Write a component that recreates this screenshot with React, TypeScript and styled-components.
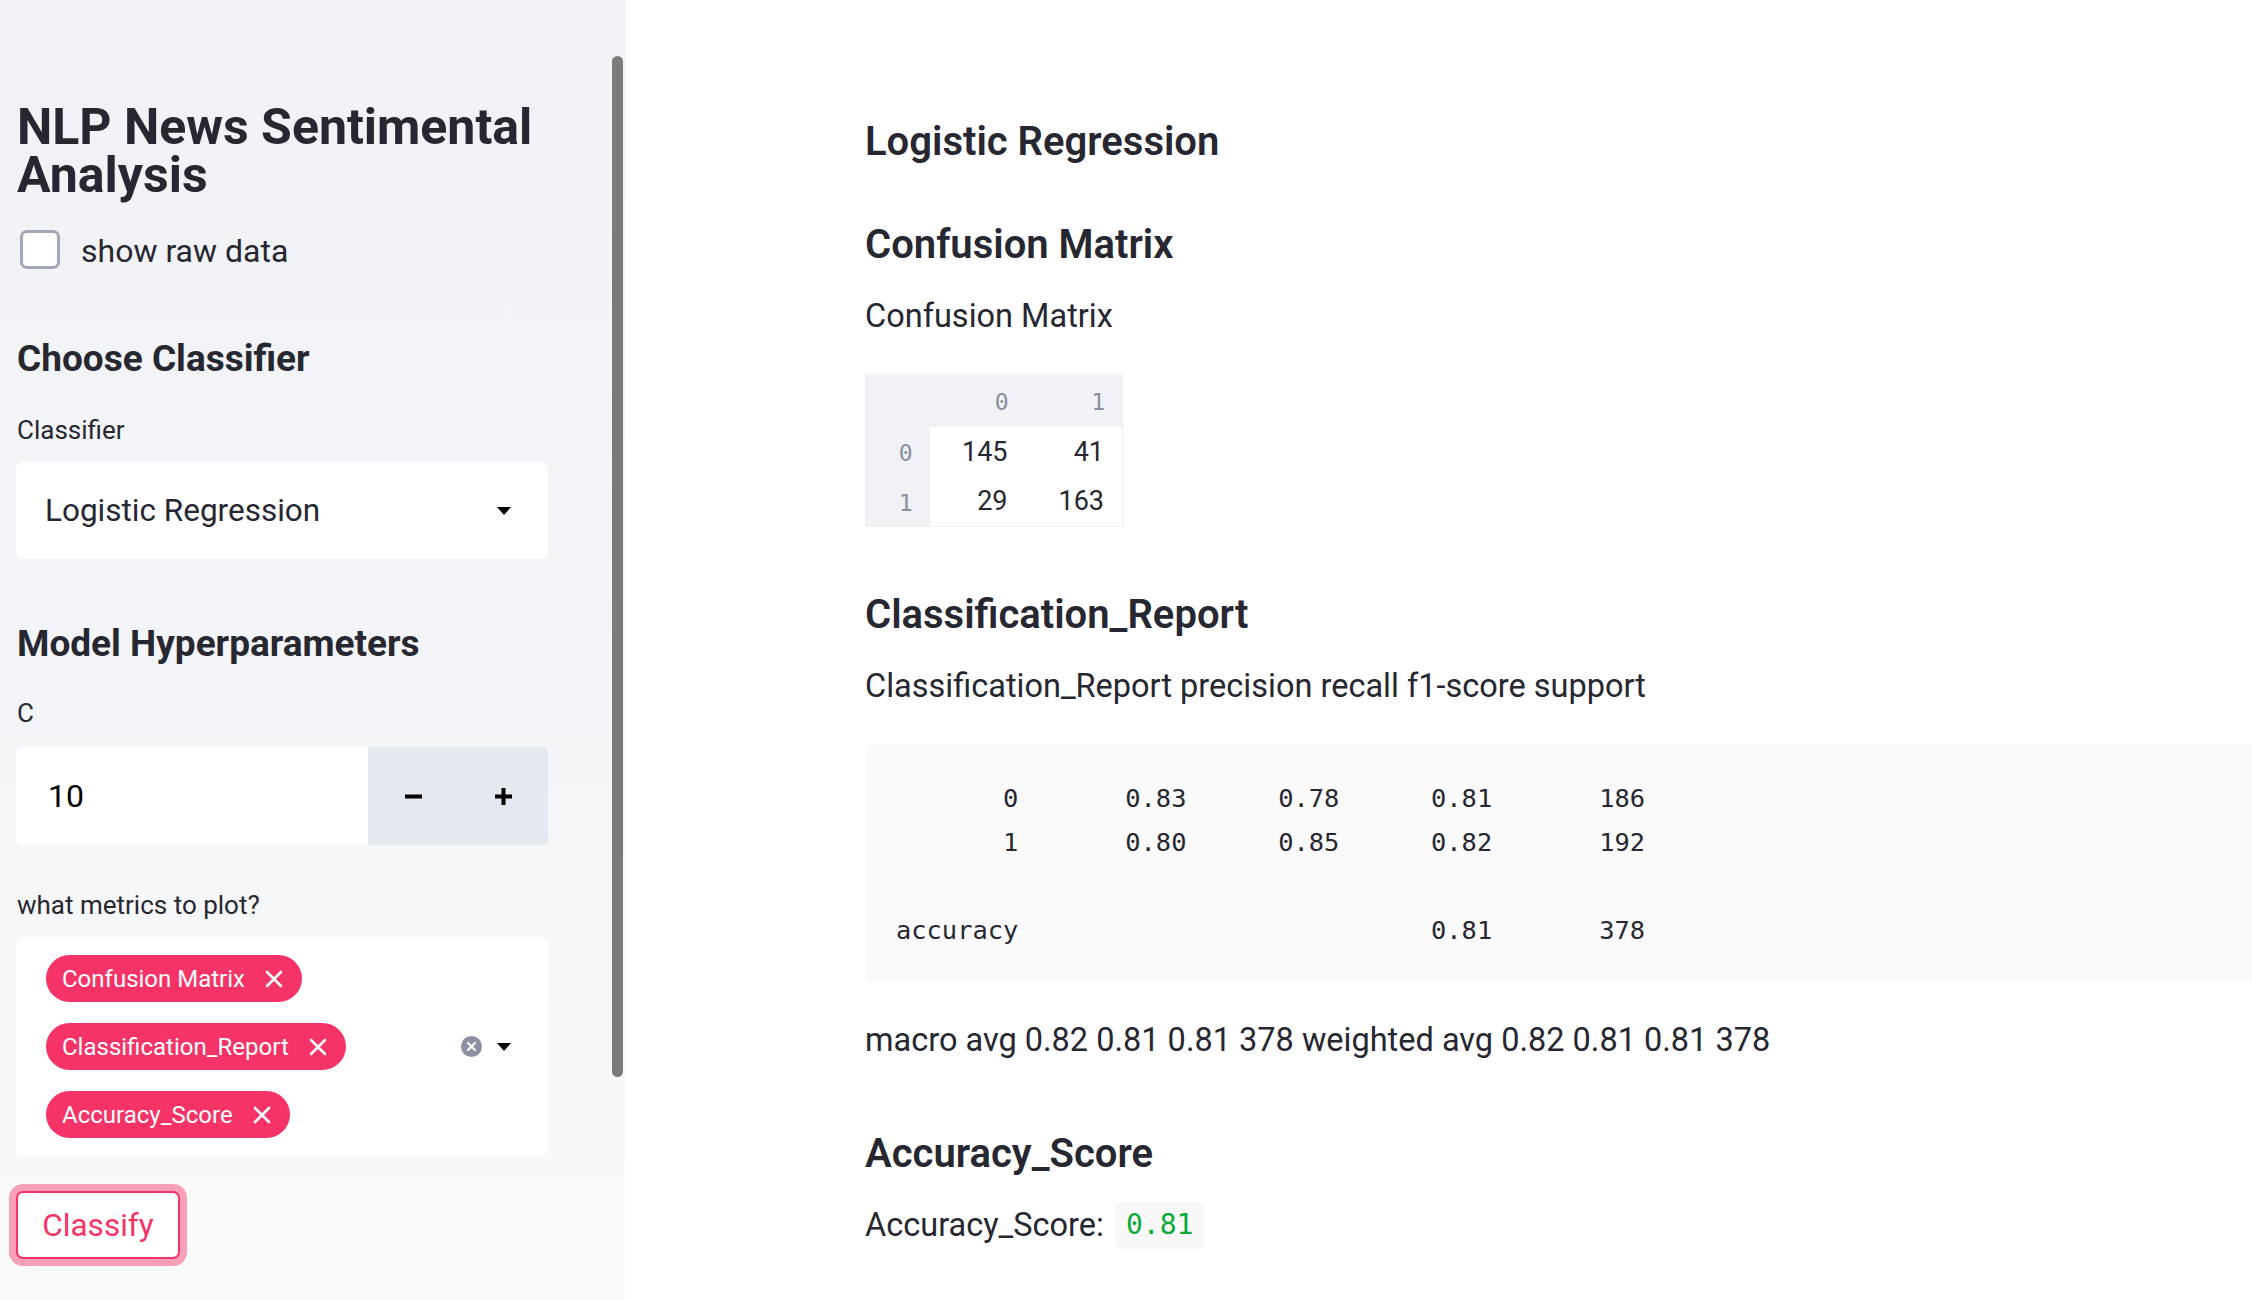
import React from "react";
import styled, { createGlobalStyle } from "styled-components";

const GlobalStyle = createGlobalStyle`
  html, body {
    margin: 0;
    padding: 0;
    overflow: hidden;
    background: #ffffff;
  }
  body {
    font-family: Roboto, "Noto Sans", sans-serif;
    color: #262730;
  }
  * { box-sizing: border-box; }
`;

const PINK = "#f63366";
const TEXT = "#262730";

const Page = styled.div`
  display: flex;
  width: 2252px;
  height: 1300px;
  overflow: hidden;
`;

const Sidebar = styled.aside`
  position: relative;
  flex: 0 0 625px;
  height: 100%;
  background: linear-gradient(180deg, #f0f2f6 0%, #f4f5f8 55%, #fafafa 100%);
  padding: 103px 77px 0 16px;
  display: flex;
  flex-direction: column;
`;

const ScrollThumb = styled.div`
  position: absolute;
  left: 612px;
  top: 56px;
  width: 11px;
  height: 1021px;
  border-radius: 6px;
  background: #7b7b7d;
`;

const SideTitle = styled.h1`
  margin: 0;
  font-size: 50px;
  line-height: 48px;
  font-weight: 700;
  color: ${TEXT};
  padding-left: 1px;
`;

const CheckRow = styled.label`
  display: flex;
  align-items: center;
  gap: 21px;
  margin-top: 31px;
  padding-left: 4px;
  height: 39px;
`;

const CheckBox = styled.span`
  width: 40px;
  height: 39px;
  border: 3px solid #a3a8b8;
  border-radius: 7px;
  background: #ffffff;
  flex: 0 0 auto;
`;

const CheckText = styled.span`
  font-size: 32px;
  line-height: 39px;
  padding-top: 3px;
  color: ${TEXT};
`;

const SideHeading = styled.h2<{ $mt: number }>`
  margin: ${(p) => p.$mt}px 0 0 0;
  font-size: 37px;
  line-height: 43px;
  font-weight: 700;
  color: ${TEXT};
  padding-left: 1px;
`;

const FieldLabel = styled.div<{ $mt: number }>`
  margin-top: ${(p) => p.$mt}px;
  font-size: 26px;
  line-height: 30px;
  color: ${TEXT};
  padding-left: 1px;
`;

const SelectBox = styled.div`
  margin-top: 17px;
  height: 97px;
  background: #ffffff;
  border-radius: 7px;
  display: flex;
  align-items: center;
  justify-content: space-between;
  padding: 0 37px 0 29px;
`;

const SelectValue = styled.span`
  font-size: 31.5px;
  color: ${TEXT};
`;

const NumberInput = styled.div`
  margin-top: 19px;
  height: 98px;
  display: flex;
  border-radius: 7px;
  overflow: hidden;
`;

const NumberField = styled.div`
  flex: 1 1 auto;
  background: #ffffff;
  display: flex;
  align-items: center;
  padding-left: 32px;
  font-size: 32px;
  color: #000000;
`;

const StepButtons = styled.div`
  flex: 0 0 180px;
  display: flex;
  background: #e4e9f1;
`;

const StepButton = styled.div`
  flex: 1 1 50%;
  display: flex;
  align-items: center;
  justify-content: center;
`;

const MultiBox = styled.div`
  margin-top: 17px;
  height: 219px;
  background: #ffffff;
  border-radius: 7px;
  display: flex;
  align-items: center;
  padding: 0 37px 0 30px;
`;

const TagList = styled.div`
  flex: 1 1 auto;
  display: flex;
  flex-direction: column;
  align-items: flex-start;
  gap: 21px;
`;

const Tag = styled.span`
  display: inline-flex;
  align-items: center;
  height: 47px;
  border-radius: 24px;
  background: ${PINK};
  color: #ffffff;
  font-size: 24px;
  padding: 0 19px 0 16px;
  gap: 20px;
`;

const MultiIcons = styled.div`
  display: flex;
  align-items: center;
  gap: 15px;
`;

const ClassifyButton = styled.button`
  margin-top: 35px;
  align-self: flex-start;
  width: 164px;
  height: 68px;
  border: 2.5px solid ${PINK};
  border-radius: 7px;
  background: #ffffff;
  color: ${PINK};
  font-family: Roboto, "Noto Sans", sans-serif;
  font-size: 31.5px;
  box-shadow: 0 0 0 7px rgba(246, 51, 102, 0.45);
  padding: 0;
`;

const Main = styled.main`
  flex: 1 1 auto;
  height: 100%;
  overflow: hidden;
  padding: 118px 0 0 240px;
`;

const Content = styled.div`
  width: 1440px;
  display: flex;
  flex-direction: column;
  align-items: flex-start;
`;

const Heading = styled.h3<{ $first?: boolean }>`
  margin: ${(p) => (p.$first ? 0 : 32)}px 0 23px 0;
  font-size: 40px;
  line-height: 48px;
  font-weight: 600;
  color: ${TEXT};
`;

const Para = styled.p`
  margin: 0 0 34px 0;
  font-size: 32.5px;
  line-height: 48px;
  color: ${TEXT};
  display: flex;
  align-items: center;
`;

const Table = styled.table`
  border-collapse: collapse;
  margin: 0 0 32px 0;
  border: 1px solid #eef0f4;
`;

const Th = styled.th<{ $w: number; $h: number }>`
  width: ${(p) => p.$w}px;
  height: ${(p) => p.$h}px;
  background: #f0f2f6;
  font-family: "DejaVu Sans Mono", monospace;
  font-weight: 400;
  font-size: 23px;
  color: #8a8fa0;
  text-align: right;
  padding: 3px 17px 0 0;
`;

const Td = styled.td`
  height: 50px;
  background: #ffffff;
  font-size: 27px;
  color: ${TEXT};
  text-align: right;
  padding: 0 18px 0 0;
`;

const Pre = styled.pre`
  margin: 0 0 34px 0;
  width: 1440px;
  background: #fafafa;
  border-radius: 7px;
  padding: 32px 0 30px 31px;
  font-family: "DejaVu Sans Mono", monospace;
  font-size: 25.4px;
  line-height: 44px;
  color: ${TEXT};
`;

const InlineCode = styled.code`
  margin-left: 11px;
  display: inline-flex;
  align-items: center;
  height: 47px;
  padding: 0 11px;
  background: #f8f8f8;
  border-radius: 7px;
  color: #09ab3b;
  font-family: "DejaVu Sans Mono", monospace;
  font-size: 28px;
`;

const Caret = () => (
  <svg width="14" height="8" viewBox="0 0 14 8">
    <path d="M0 0 H14 L7 8 Z" fill="#000" />
  </svg>
);

const TagX = () => (
  <svg width="18" height="18" viewBox="0 0 18 18">
    <path d="M2 2 L16 16 M16 2 L2 16" stroke="#fff" strokeWidth="2.6" strokeLinecap="round" />
  </svg>
);

const ClearIcon = () => (
  <svg width="21" height="21" viewBox="0 0 21 21">
    <circle cx="10.5" cy="10.5" r="10.5" fill="#8c91a2" />
    <path d="M7 7 L14 14 M14 7 L7 14" stroke="#fff" strokeWidth="2.2" strokeLinecap="round" />
  </svg>
);

const MinusIcon = () => (
  <svg width="17" height="17" viewBox="0 0 17 17">
    <rect x="0" y="6.5" width="17" height="4" fill="#000" />
  </svg>
);

const PlusIcon = () => (
  <svg width="17" height="17" viewBox="0 0 17 17">
    <rect x="0" y="6.5" width="17" height="4" fill="#000" />
    <rect x="6.5" y="0" width="4" height="17" fill="#000" />
  </svg>
);

const reportText = [
  "       0       0.83      0.78      0.81       186",
  "       1       0.80      0.85      0.82       192",
  "",
  "accuracy                           0.81       378",
].join("\n");

const matrix = [
  ["0", "145", "41"],
  ["1", "29", "163"],
];

export default function App() {
  return (
    <>
      <GlobalStyle />
      <Page>
        <Sidebar>
          <SideTitle>NLP News Sentimental Analysis</SideTitle>
          <CheckRow>
            <CheckBox />
            <CheckText>show raw data</CheckText>
          </CheckRow>
          <SideHeading $mt={68}>Choose Classifier</SideHeading>
          <FieldLabel $mt={35}>Classifier</FieldLabel>
          <SelectBox>
            <SelectValue>Logistic Regression</SelectValue>
            <Caret />
          </SelectBox>
          <SideHeading $mt={63}>Model Hyperparameters</SideHeading>
          <FieldLabel $mt={33}>C</FieldLabel>
          <NumberInput>
            <NumberField>10</NumberField>
            <StepButtons>
              <StepButton><MinusIcon /></StepButton>
              <StepButton><PlusIcon /></StepButton>
            </StepButtons>
          </NumberInput>
          <FieldLabel $mt={45}>what metrics to plot?</FieldLabel>
          <MultiBox>
            <TagList>
              <Tag>Confusion Matrix<TagX /></Tag>
              <Tag>Classification_Report<TagX /></Tag>
              <Tag>Accuracy_Score<TagX /></Tag>
            </TagList>
            <MultiIcons>
              <ClearIcon />
              <Caret />
            </MultiIcons>
          </MultiBox>
          <ClassifyButton>Classify</ClassifyButton>
          <ScrollThumb />
        </Sidebar>
        <Main>
          <Content>
            <Heading $first>Logistic Regression</Heading>
            <Heading>Confusion Matrix</Heading>
            <Para>Confusion Matrix</Para>
            <Table>
              <thead>
                <tr>
                  <Th $w={64} $h={52}></Th>
                  <Th $w={96} $h={52}>0</Th>
                  <Th $w={97} $h={52}>1</Th>
                </tr>
              </thead>
              <tbody>
                {matrix.map((row) => (
                  <tr key={row[0]}>
                    <Th $w={64} $h={50}>{row[0]}</Th>
                    <Td>{row[1]}</Td>
                    <Td>{row[2]}</Td>
                  </tr>
                ))}
              </tbody>
            </Table>
            <Heading>Classification_Report</Heading>
            <Para>Classification_Report precision recall f1-score support</Para>
            <Pre>{reportText}</Pre>
            <Para>macro avg 0.82 0.81 0.81 378 weighted avg 0.82 0.81 0.81 378</Para>
            <Heading>Accuracy_Score</Heading>
            <Para>
              Accuracy_Score:<InlineCode>0.81</InlineCode>
            </Para>
          </Content>
        </Main>
      </Page>
    </>
  );
}
